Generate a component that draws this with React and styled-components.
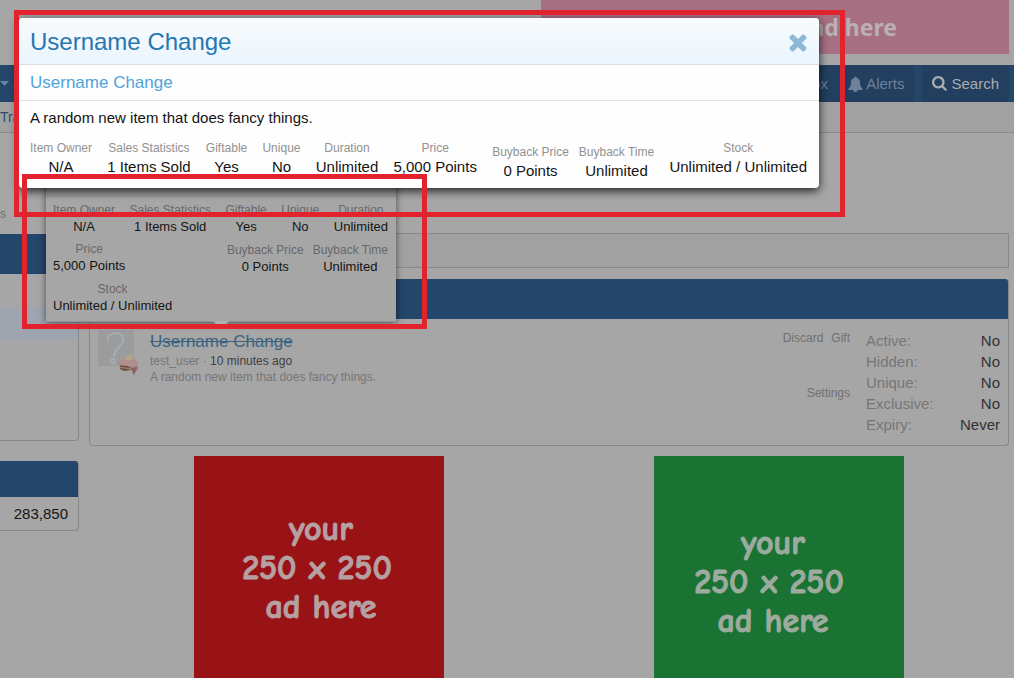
import React from "react";
import styled, { createGlobalStyle } from "styled-components";

const c = {
  page: "#a6a6a6",
  navy: "#24466a",
  navyDark: "#223f60",
  line: "#86888a",
  muted: "#707070",
  ink: "#141414",
  red: "#e0232c",
};

const Global = createGlobalStyle`
  * { box-sizing: border-box; }
  body {
    margin: 0;
    background: ${c.page};
    color: ${c.ink};
    font-family: "Liberation Sans", Arial, sans-serif;
    font-size: 15px;
  }
  a { color: inherit; text-decoration: none; }
  h1, h2, p, dl, dd, dt { margin: 0; font-weight: normal; }
  button { border: 0; padding: 0; background: none; font: inherit; cursor: pointer; }
`;

const Page = styled.div`
  position: relative;
  height: 100vh;
  overflow: hidden;
`;

/* Header and navigation */
const Header = styled.header`
  display: flex;
  justify-content: flex-end;
  height: 65px;
  padding-right: 5px;
`;
const Banner = styled.a`
  width: 468px;
  height: 54px;
  padding-right: 112px;
  background: #a67082;
  color: #b9b1b4;
  font: bold 23px/54px "Noto Sans", "Open Sans", sans-serif;
  text-align: right;
`;
const Nav = styled.nav`
  display: flex;
  align-items: stretch;
  height: 37px;
  padding-right: 5px;
  background: ${c.navy};
`;
const Caret = styled.button`
  display: flex;
  align-items: center;
  margin-right: auto;
`;
const NavTab = styled.a`
  display: flex;
  align-items: center;
  gap: 3px;
  padding: 0 10px;
  margin-left: ${(p) => (p.$apart ? "8px" : "0")};
  background: ${c.navyDark};
  color: ${(p) => (p.$bright ? "#a9acb0" : "#6d8299")};
`;
const SubNav = styled.nav`
  height: 31px;
  border-bottom: 1px solid ${c.line};
  background: #a1a1a1;
  color: #2b4d70;
  font-size: 14px;
  line-height: 30px;
`;

/* Page body */
const Body = styled.div`
  display: flex;
  gap: 10px;
  padding: 71px 5px 0 0;
`;
const Sidebar = styled.aside`
  width: 79px;
  flex: none;
`;
const Crumb = styled.p`
  margin-bottom: 10px;
  color: ${c.muted};
  font-size: 12px;
  line-height: 20px;
`;
const SidePanel = styled.section`
  margin-bottom: 20px;
  border: solid ${c.line};
  border-width: 0 1px 1px 0;
  border-radius: 0 4px 4px 0;
  min-height: ${(p) => (p.$tall ? "207px" : "70px")};
`;
const PanelHead = styled.div`
  height: ${(p) => (p.$small ? "36px" : "40px")};
  border-radius: ${(p) => (p.$full ? "3px 3px 0 0" : "0 3px 0 0")};
  background: ${c.navy};
`;
const SideRow = styled.div`
  height: 33px;
  padding-right: 10px;
  background: ${(p) => (p.$active ? "#9ea5af" : "transparent")};
  line-height: 34px;
  text-align: right;
`;
const Main = styled.main`
  flex: 1;
  padding-top: 29px;
`;
const Notice = styled.div`
  height: 35px;
  margin-bottom: 11px;
  border: 1px solid ${c.line};
  background: #a1a1a1;
`;
const Panel = styled.section`
  margin-bottom: 10px;
  border: 1px solid ${c.line};
  border-top: 0;
  border-radius: 4px;
`;
const Item = styled.article`
  display: flex;
  padding: 11px 8px 10px;
`;
const Avatar = styled.div`
  position: relative;
  width: 36px;
  height: 36px;
  margin-right: 16px;
  background: #9a9c9e;
`;
const Badge = styled.svg`
  position: absolute;
  left: 21px;
  top: 23px;
`;
const ItemText = styled.div`
  flex: 1;
  color: #767676;
  font-size: 12px;
  line-height: 16px;
`;
const ItemTitle = styled.a`
  display: block;
  color: #3b6380;
  font-size: 17px;
  line-height: 23px;
  text-decoration: line-through;
`;
const Time = styled.time`
  color: #404040;
`;
const Actions = styled.div`
  display: grid;
  grid-template-columns: auto auto;
  column-gap: 8px;
  row-gap: 39px;
  align-content: start;
  justify-items: end;
  margin-right: 16px;
  color: #707070;
  font-size: 12px;
  line-height: 16px;
`;
const Setting = styled.a`
  grid-column: 1 / 3;
`;
const Flags = styled.dl`
  width: 134px;
  color: #767676;
  line-height: 21px;
`;
const Flag = styled.div`
  display: flex;
  justify-content: space-between;
  dd { color: #333; }
`;
const Ads = styled.div`
  display: grid;
  grid-template-columns: 1fr 1fr;
  justify-items: center;
`;
const Ad = styled.a`
  width: 250px;
  height: 250px;
  padding: ${(p) => (p.$green ? "68px 20px 0 0" : "54px 4px 0 0")};
  background: ${(p) => (p.$green ? "#1a7332" : "#991216")};
  color: ${(p) => (p.$green ? "#9dab9f" : "#b6a0a2")};
  font: bold 34px/39px "Comic Sans MS", "Comic Neue", "Open Sans", sans-serif;
  -webkit-text-stroke: 1px currentColor;
  text-align: center;
  span { display: block; padding-left: 8px; }
  span:nth-child(2) { padding-left: 0; }
`;

/* Item statistics, shared by the dialog and the preview */
const Stat = styled.div`
  text-align: center;
  white-space: nowrap;
  dt { color: #919191; font-size: 12px; line-height: 18px; }
  dd { line-height: 20px; }
`;
const Stats = styled.dl`
  display: flex;
  align-items: flex-start;
  justify-content: space-between;
  padding: 4px 12px 7px 11px;
`;
const Pair = styled.div`
  display: flex;
  gap: ${(p) => (p.$low ? "10px" : "9px")};
  padding-top: ${(p) => (p.$low ? "4px" : "1px")};
`;

/* Hover preview below the dialog */
const Preview = styled.section`
  position: absolute;
  left: 46px;
  top: 160px;
  width: 350px;
  height: 162px;
  padding: 42px 8px 0 7px;
  background: ${c.page};
  border-bottom: 1px solid #909496;
  box-shadow: 0 1px 7px rgba(0, 0, 0, 0.55);
  ${Stat} dt { color: #686868; line-height: 16px; }
  ${Stat} dd { font-size: 13px; line-height: 17px; }
  &::before {
    content: "";
    position: absolute;
    inset: 0 0 auto;
    height: 36px;
    background: #9a9c9e;
    border-bottom: 1px solid #8f9294;
  }
  &::after {
    content: "";
    position: absolute;
    left: 167px;
    top: 161px;
    border: solid transparent;
    border-width: 8px 8px 0;
    border-top-color: #b0b0b0;
  }
`;
const PreviewRow = styled.dl`
  display: flex;
  justify-content: space-between;
  margin-bottom: 6px;
`;

/* Dialog */
const Dialog = styled.section`
  position: absolute;
  left: 19px;
  top: 18px;
  width: 800px;
  max-width: calc(100vw - 38px);
  border-radius: 4px;
  background: #fefefe;
  box-shadow: 0 3px 10px rgba(0, 0, 0, 0.8);
`;
const DialogHead = styled.header`
  display: flex;
  align-items: center;
  justify-content: space-between;
  height: 47px;
  padding: 2px 8px 0 11px;
  border-bottom: 1px solid #d7dde2;
  border-radius: 4px 4px 0 0;
  background: linear-gradient(#f8fbfd, #ebf5fd);
  h1 { color: #2577b1; font-size: 24px; line-height: 44px; }
  button { display: flex; }
`;
const DialogSub = styled.h2`
  padding: 0 11px;
  border-bottom: 1px solid #e4e4e4;
  color: #4fa4da;
  font-size: 17px;
  line-height: 35px;
`;
const Lead = styled.p`
  padding: 0 11px;
  line-height: 34px;
`;

const Marker = styled.div`
  position: absolute;
  left: ${(p) => p.$x}px;
  top: ${(p) => p.$y}px;
  width: ${(p) => p.$w}px;
  height: ${(p) => p.$h}px;
  border: 5px solid ${c.red};
  pointer-events: none;
`;

const SearchIcon = () => (
  <svg width="16" height="16" viewBox="0 0 1792 1792" fill="currentColor" aria-hidden="true">
    <path d="M1152 704q0-185-131.500-316.500t-316.500-131.500-316.500 131.500-131.500 316.500 131.500 316.500 316.500 131.500 316.500-131.500 131.500-316.500zm512 832q0 52-38 90t-90 38q-54 0-90-38l-343-342q-179 124-399 124-143 0-273.500-55.500t-225-150-150-225-55.500-273.500 55.500-273.500 150-225 225-150 273.500-55.500 273.500 55.500 225 150 150 225 55.500 273.500q0 220-124 399l343 343q37 37 37 90z" />
  </svg>
);
const BellIcon = () => (
  <svg width="15" height="16" viewBox="0 0 15 16" fill="currentColor" aria-hidden="true">
    <path d="M7.500 0.500c.6 0 1 .4 1 1v.3C11 2.300 12 4.300 12 6.500c0 3.200 1 4.800 2.800 6.300 0 .6-.4 1.200-1 1.200H9.600a2.100 2.100 0 0 1-4.200 0H1.200c-.6 0-1-.6-1-1.200C2 11.300 3 9.700 3 6.500c0-2.200 1-4.200 3.500-4.700v-.3c0-.6.400-1 1-1z" />
  </svg>
);
const CloseIcon = () => (
  <svg width="26" height="26" viewBox="0 0 1792 1792" fill="#8bb9d7" aria-hidden="true">
    <path d="M1490 1322q0 40-28 68l-136 136q-28 28-68 28t-68-28l-294-294-294 294q-28 28-68 28t-68-28l-136-136q-28-28-28-68t28-68l294-294-294-294q-28-28-28-68t28-68l136-136q28-28 68-28t68 28l294 294 294-294q28-28 68-28t68 28l136 136q28 28 28 68t-28 68l-294 294 294 294q28 28 28 68z" />
  </svg>
);
const Question = () => (
  <svg width="36" height="36" viewBox="0 0 36 36" fill="none" aria-hidden="true">
    <path d="M10 11c-1-5 3-8 8-8s8 3 7 8c-1 6-9 7-9 16" stroke="#a9abad" strokeWidth="2" />
    <circle cx="15" cy="31" r="2" stroke="#a9abad" strokeWidth="2" />
  </svg>
);
const Cake = () => (
  <Badge width="20" height="23" viewBox="0 0 20 23" aria-hidden="true">
    <path d="M0 10l2-3 14-1 3 4v6l-3 4-5-3-6 1-4-2z" fill="#a88480" />
    <path d="M1 12l10 1v4l-6 1-4-2z" fill="#6f5045" />
    <path d="M1 14l10 1v1L1 15z" fill="#a98a78" />
    <path d="M0 9c1-3 4-3 6-4 3 2 6-1 9 1 2 1 4 3 4 6l-3 1-2 1-2-1-2 1-2-2-2 1-2-1-2 1z" fill="#b18f90" />
    <path d="M5 6c1-2 4-3 6-6 2 2 3 4 3 6-3 2-6 1-9 0z" fill="#b3a58c" />
    <path d="M12 15l6-1v2l-3 3-3-2z" fill="#8b625c" />
    <path d="M13 19l4-2-2 5z" fill="#945f61" />
  </Badge>
);

const S = ({ label, children }) => (
  <Stat>
    <dt>{label}</dt>
    <dd>{children}</dd>
  </Stat>
);

const flags = [
  ["Active:", "No"],
  ["Hidden:", "No"],
  ["Unique:", "No"],
  ["Exclusive:", "No"],
  ["Expiry:", "Never"],
];

const AdText = () => (
  <>
    <span>your</span>
    <span>250 x 250</span>
    <span>ad here</span>
  </>
);

const BasicStats = () => (
  <>
    <S label="Item Owner">N/A</S>
    <S label="Sales Statistics">1 Items Sold</S>
    <S label="Giftable">Yes</S>
    <S label="Unique">No</S>
    <S label="Duration">Unlimited</S>
  </>
);
const Buyback = ({ low }) => (
  <Pair $low={low}>
    <S label="Buyback Price">0 Points</S>
    <S label="Buyback Time">Unlimited</S>
  </Pair>
);

export default function App() {
  return (
    <Page>
      <Global />
      <Header>
        <Banner href="#">ad here</Banner>
      </Header>
      <Nav>
        <Caret aria-label="Open menu">
          <svg width="10" height="6" viewBox="0 0 10 6" aria-hidden="true">
            <path d="M0 0h9L4.500 5z" fill="#6484a3" />
          </svg>
        </Caret>
        <NavTab href="#">Inbox</NavTab>
        <NavTab href="#"><BellIcon />Alerts</NavTab>
        <NavTab href="#" $apart $bright><SearchIcon />Search</NavTab>
      </Nav>
      <SubNav><a href="#">Tra</a></SubNav>

      <Body>
        <Sidebar>
          <Crumb>s</Crumb>
          <SidePanel $tall>
            <PanelHead />
            <SideRow />
            <SideRow $active />
          </SidePanel>
          <SidePanel>
            <PanelHead $small />
            <SideRow>283,850</SideRow>
          </SidePanel>
        </Sidebar>
        <Main>
          <Notice />
          <Panel>
            <PanelHead $full />
            <Item>
              <Avatar><Question /><Cake /></Avatar>
              <ItemText>
                <ItemTitle href="#">Username Change</ItemTitle>
                <p><a href="#">test_user</a> · <Time>10 minutes ago</Time></p>
                <p>A random new item that does fancy things.</p>
              </ItemText>
              <Actions>
                <a href="#">Discard</a>
                <a href="#">Gift</a>
                <Setting href="#">Settings</Setting>
              </Actions>
              <Flags>
                {flags.map(([k, v]) => (
                  <Flag key={k}><dt>{k}</dt><dd>{v}</dd></Flag>
                ))}
              </Flags>
            </Item>
          </Panel>
          <Ads>
            <Ad href="#"><AdText /></Ad>
            <Ad href="#" $green><AdText /></Ad>
          </Ads>
        </Main>
      </Body>

      <Preview>
        <PreviewRow><BasicStats /></PreviewRow>
        <PreviewRow>
          <S label="Price">5,000 Points</S>
          <Buyback />
        </PreviewRow>
        <PreviewRow><S label="Stock">Unlimited / Unlimited</S></PreviewRow>
      </Preview>

      <Dialog role="dialog" aria-labelledby="dialog-title">
        <DialogHead>
          <h1 id="dialog-title">Username Change</h1>
          <button aria-label="Close"><CloseIcon /></button>
        </DialogHead>
        <DialogSub>Username Change</DialogSub>
        <Lead>A random new item that does fancy things.</Lead>
        <Stats>
          <BasicStats />
          <S label="Price">5,000 Points</S>
          <Buyback low />
          <S label="Stock">Unlimited / Unlimited</S>
        </Stats>
      </Dialog>

      <Marker $x={14} $y={10} $w={831} $h={207} />
      <Marker $x={22} $y={174} $w={405} $h={155} />
    </Page>
  );
}
